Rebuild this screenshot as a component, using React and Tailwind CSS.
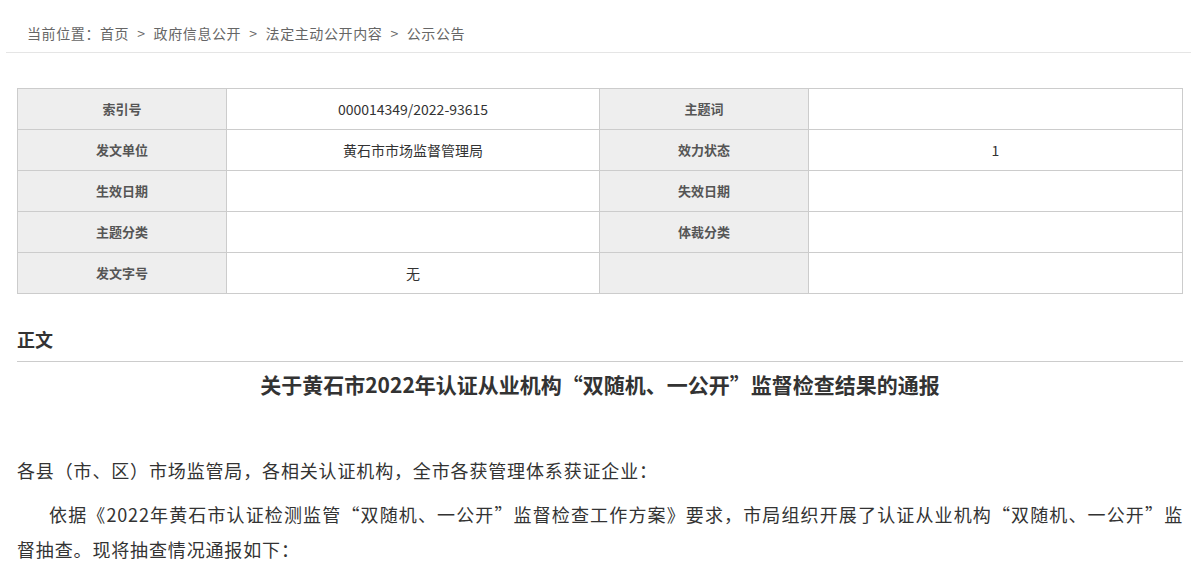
const font = { fontFamily: '"Microsoft YaHei", "Noto Sans CJK SC", "Noto Sans", sans-serif' };

const rows = [
  ['索引号', '000014349/2022-93615', '主题词', ''],
  ['发文单位', '黄石市市场监督管理局', '效力状态', '1'],
  ['生效日期', '', '失效日期', ''],
  ['主题分类', '', '体裁分类', ''],
  ['发文字号', '无', '', ''],
];

const crumbs = ['首页', '政府信息公开', '法定主动公开内容', '公示公告'];

function MetaTable() {
  return (
    <table className="w-full border-collapse table-fixed">
      <colgroup>
        <col className="w-[209px]" />
        <col className="w-[373px]" />
        <col className="w-[209px]" />
        <col />
      </colgroup>
      <tbody>
        {rows.map((r, i) => (
          <tr key={i} className="h-[41px]">
            <td className="border border-[#cccccc] bg-[#eeeeee] text-center text-[13px] font-bold text-[#555555]">{r[0]}</td>
            <td className="border border-[#cccccc] text-center text-[14px] text-[#333333]">{r[1]}</td>
            <td className="border border-[#cccccc] bg-[#eeeeee] text-center text-[13px] font-bold text-[#555555]">{r[2]}</td>
            <td className="border border-[#cccccc] text-center text-[14px] text-[#333333]">{r[3]}</td>
          </tr>
        ))}
      </tbody>
    </table>
  );
}

export default function App() {
  return (
    <div className="min-h-screen bg-white overflow-hidden" style={font}>
      {/* Breadcrumb */}
      <div className="ml-[6px] h-[53px] border-b border-[#e5e5e5] pl-[21px] pt-[22px] text-[14px] leading-[22px] tracking-[0.6px] text-[#666666]">
        当前位置：
        {crumbs.map((c, i) => (
          <span key={c}>
            {i > 0 && <span className="mx-[8px]">&gt;</span>}
            {c}
          </span>
        ))}
      </div>

      <div className="mx-[17px] mr-[8px] pt-[35px]">
        <MetaTable />

        {/* Body */}
        <div className="mt-[31px] border-b border-[#cccccc] pb-[8px] text-[18px] font-bold leading-[28px] text-[#333333]">
          正文
        </div>
        <h1 className="mt-[7px] text-center text-[21px] font-bold leading-[30px] text-[#333333]">
          关于黄石市2022年认证从业机构“双随机、一公开”监督检查结果的通报
        </h1>
        <div className="mt-[54px] text-[18px] leading-[35px] tracking-[0.85px] text-[#333333]">
          <p className="mb-[9px]">各县（市、区）市场监管局，各相关认证机构，全市各获管理体系获证企业：</p>
          <p className="indent-[32px] text-justify">
            依据《2022年黄石市认证检测监管“双随机、一公开”监督检查工作方案》要求，市局组织开展了认证从业机构“双随机、一公开”监督抽查。现将抽查情况通报如下：
          </p>
        </div>
      </div>
    </div>
  );
}
